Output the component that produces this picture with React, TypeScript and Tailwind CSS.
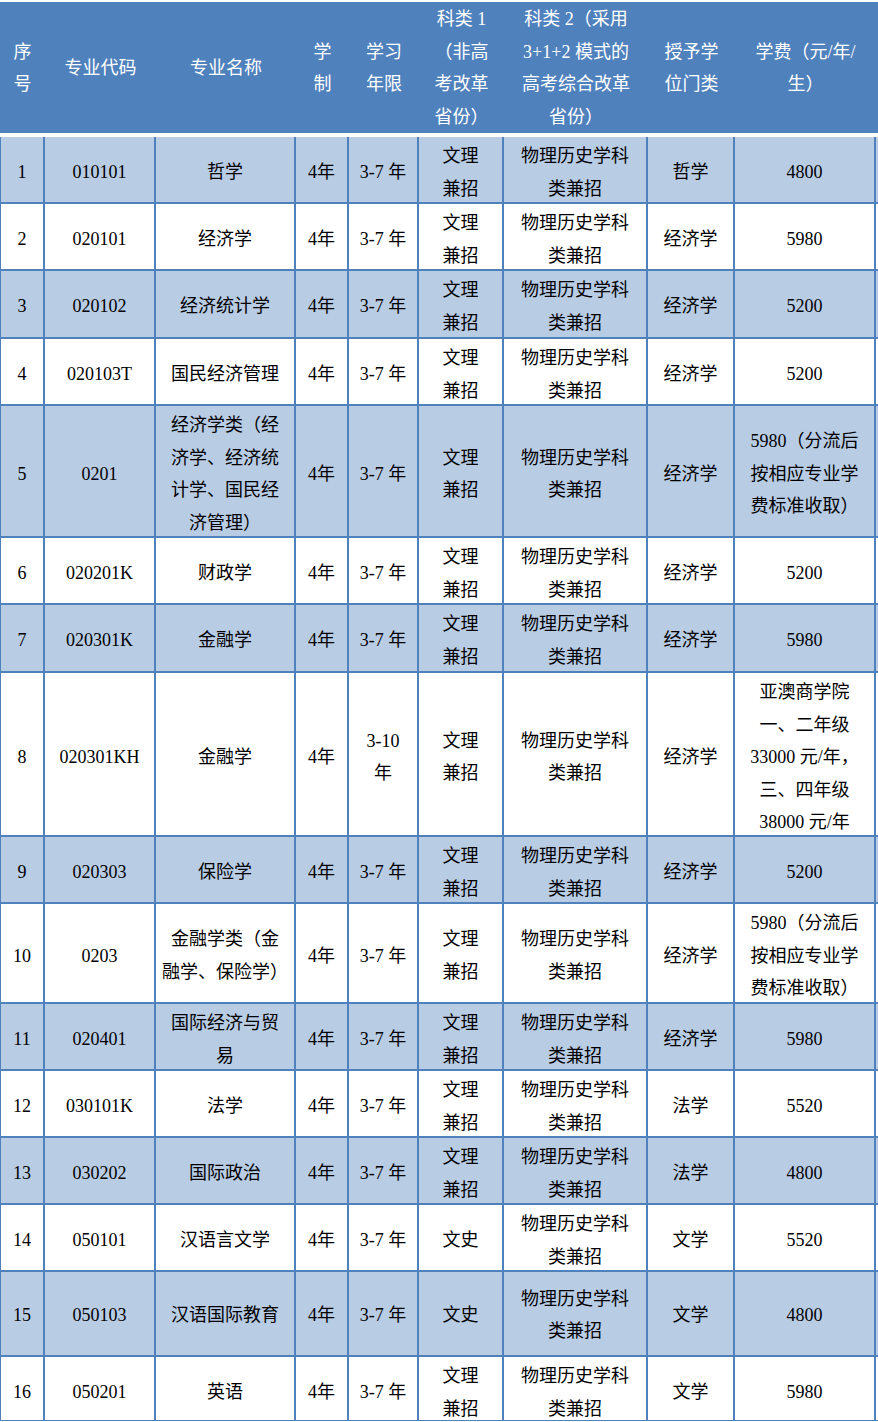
import React from "react";

type Row = {
  no: string;
  code: string;
  name: string[];
  len: string[];
  k1: string[];
  fee: string[];
  deg: string;
  h: string;
};

const k2 = ["物理历史学科", "类兼招"];
const wl = ["文理", "兼招"];
const split = ["5980（分流后", "按相应专业学", "费标准收取）"];

const rows: Row[] = [
  { no: "1", code: "010101", name: ["哲学"], len: ["3-7 年"], k1: wl, deg: "哲学", fee: ["4800"], h: "h-[67px]" },
  { no: "2", code: "020101", name: ["经济学"], len: ["3-7 年"], k1: wl, deg: "经济学", fee: ["5980"], h: "h-[67px]" },
  { no: "3", code: "020102", name: ["经济统计学"], len: ["3-7 年"], k1: wl, deg: "经济学", fee: ["5200"], h: "h-[68px]" },
  { no: "4", code: "020103T", name: ["国民经济管理"], len: ["3-7 年"], k1: wl, deg: "经济学", fee: ["5200"], h: "h-[67px]" },
  {
    no: "5",
    code: "0201",
    name: ["经济学类（经", "济学、经济统", "计学、国民经", "济管理）"],
    len: ["3-7 年"],
    k1: wl,
    deg: "经济学",
    fee: split,
    h: "h-[132px]",
  },
  { no: "6", code: "020201K", name: ["财政学"], len: ["3-7 年"], k1: wl, deg: "经济学", fee: ["5200"], h: "h-[67px]" },
  { no: "7", code: "020301K", name: ["金融学"], len: ["3-7 年"], k1: wl, deg: "经济学", fee: ["5980"], h: "h-[68px]" },
  {
    no: "8",
    code: "020301KH",
    name: ["金融学"],
    len: ["3-10", "年"],
    k1: wl,
    deg: "经济学",
    fee: ["亚澳商学院", "一、二年级", "33000 元/年，", "三、四年级", "38000 元/年"],
    h: "h-[164px]",
  },
  { no: "9", code: "020303", name: ["保险学"], len: ["3-7 年"], k1: wl, deg: "经济学", fee: ["5200"], h: "h-[67px]" },
  {
    no: "10",
    code: "0203",
    name: ["金融学类（金", "融学、保险学）"],
    len: ["3-7 年"],
    k1: wl,
    deg: "经济学",
    fee: split,
    h: "h-[100px]",
  },
  { no: "11", code: "020401", name: ["国际经济与贸", "易"], len: ["3-7 年"], k1: wl, deg: "经济学", fee: ["5980"], h: "h-[67px]" },
  { no: "12", code: "030101K", name: ["法学"], len: ["3-7 年"], k1: wl, deg: "法学", fee: ["5520"], h: "h-[67px]" },
  { no: "13", code: "030202", name: ["国际政治"], len: ["3-7 年"], k1: wl, deg: "法学", fee: ["4800"], h: "h-[67px]" },
  { no: "14", code: "050101", name: ["汉语言文学"], len: ["3-7 年"], k1: ["文史"], deg: "文学", fee: ["5520"], h: "h-[67px]" },
  { no: "15", code: "050103", name: ["汉语国际教育"], len: ["3-7 年"], k1: ["文史"], deg: "文学", fee: ["4800"], h: "h-[85px]" },
  { no: "16", code: "050201", name: ["英语"], len: ["3-7 年"], k1: wl, deg: "文学", fee: ["5980"], h: "h-[64px]" },
];

const cols = "grid grid-cols-[45px_111px_140px_53px_70px_85px_144px_87px_141px]";

const Lines = ({ lines }: { lines: string[] }) => (
  <div>
    {lines.map((l, i) => (
      <div key={i} className="whitespace-nowrap">
        {l}
      </div>
    ))}
  </div>
);

const Cell = ({ lines, first }: { lines: string[]; first?: boolean }) => (
  <div
    className={`flex items-center justify-center pt-[3px] text-center border-r-2 border-[#4f81bd] ${
      first ? "border-l" : ""
    }`}
  >
    <Lines lines={lines} />
  </div>
);

const headers: string[][] = [
  ["序", "号"],
  ["专业代码"],
  ["专业名称"],
  ["学", "制"],
  ["学习", "年限"],
  ["科类 1", "（非高", "考改革", "省份）"],
  ["科类 2（采用", "3+1+2 模式的", "高考综合改革", "省份）"],
  ["授予学", "位门类"],
  ["学费（元/年/", "生）"],
];

export default function App() {
  return (
    <div
      className="w-[878px] bg-white pt-[2px] text-[18px] leading-[32.5px] text-black"
      style={{ fontFamily: '"Liberation Serif", "Noto Sans CJK SC", serif' }}
    >
      <div className={`${cols} h-[131px] bg-[#4f81bd] text-white`}>
        {headers.map((h, i) => (
          <div key={i} className="flex items-center justify-center pt-[1px] text-center">
            <Lines lines={h} />
          </div>
        ))}
      </div>
      <div className="mt-[4px]">
        {rows.map((r, i) => (
          <div
            key={r.no}
            className={`${cols} ${r.h} ${i % 2 === 0 ? "bg-[#b8cce4]" : "bg-white"} ${
              i < rows.length - 1 ? "border-b-2" : "border-b"
            } border-[#4f81bd]`}
          >
            <Cell lines={[r.no]} first />
            <Cell lines={[r.code]} />
            <Cell lines={r.name} />
            <Cell lines={["4年"]} />
            <Cell lines={r.len} />
            <Cell lines={r.k1} />
            <Cell lines={k2} />
            <Cell lines={[r.deg]} />
            <Cell lines={r.fee} />
          </div>
        ))}
      </div>
    </div>
  );
}
